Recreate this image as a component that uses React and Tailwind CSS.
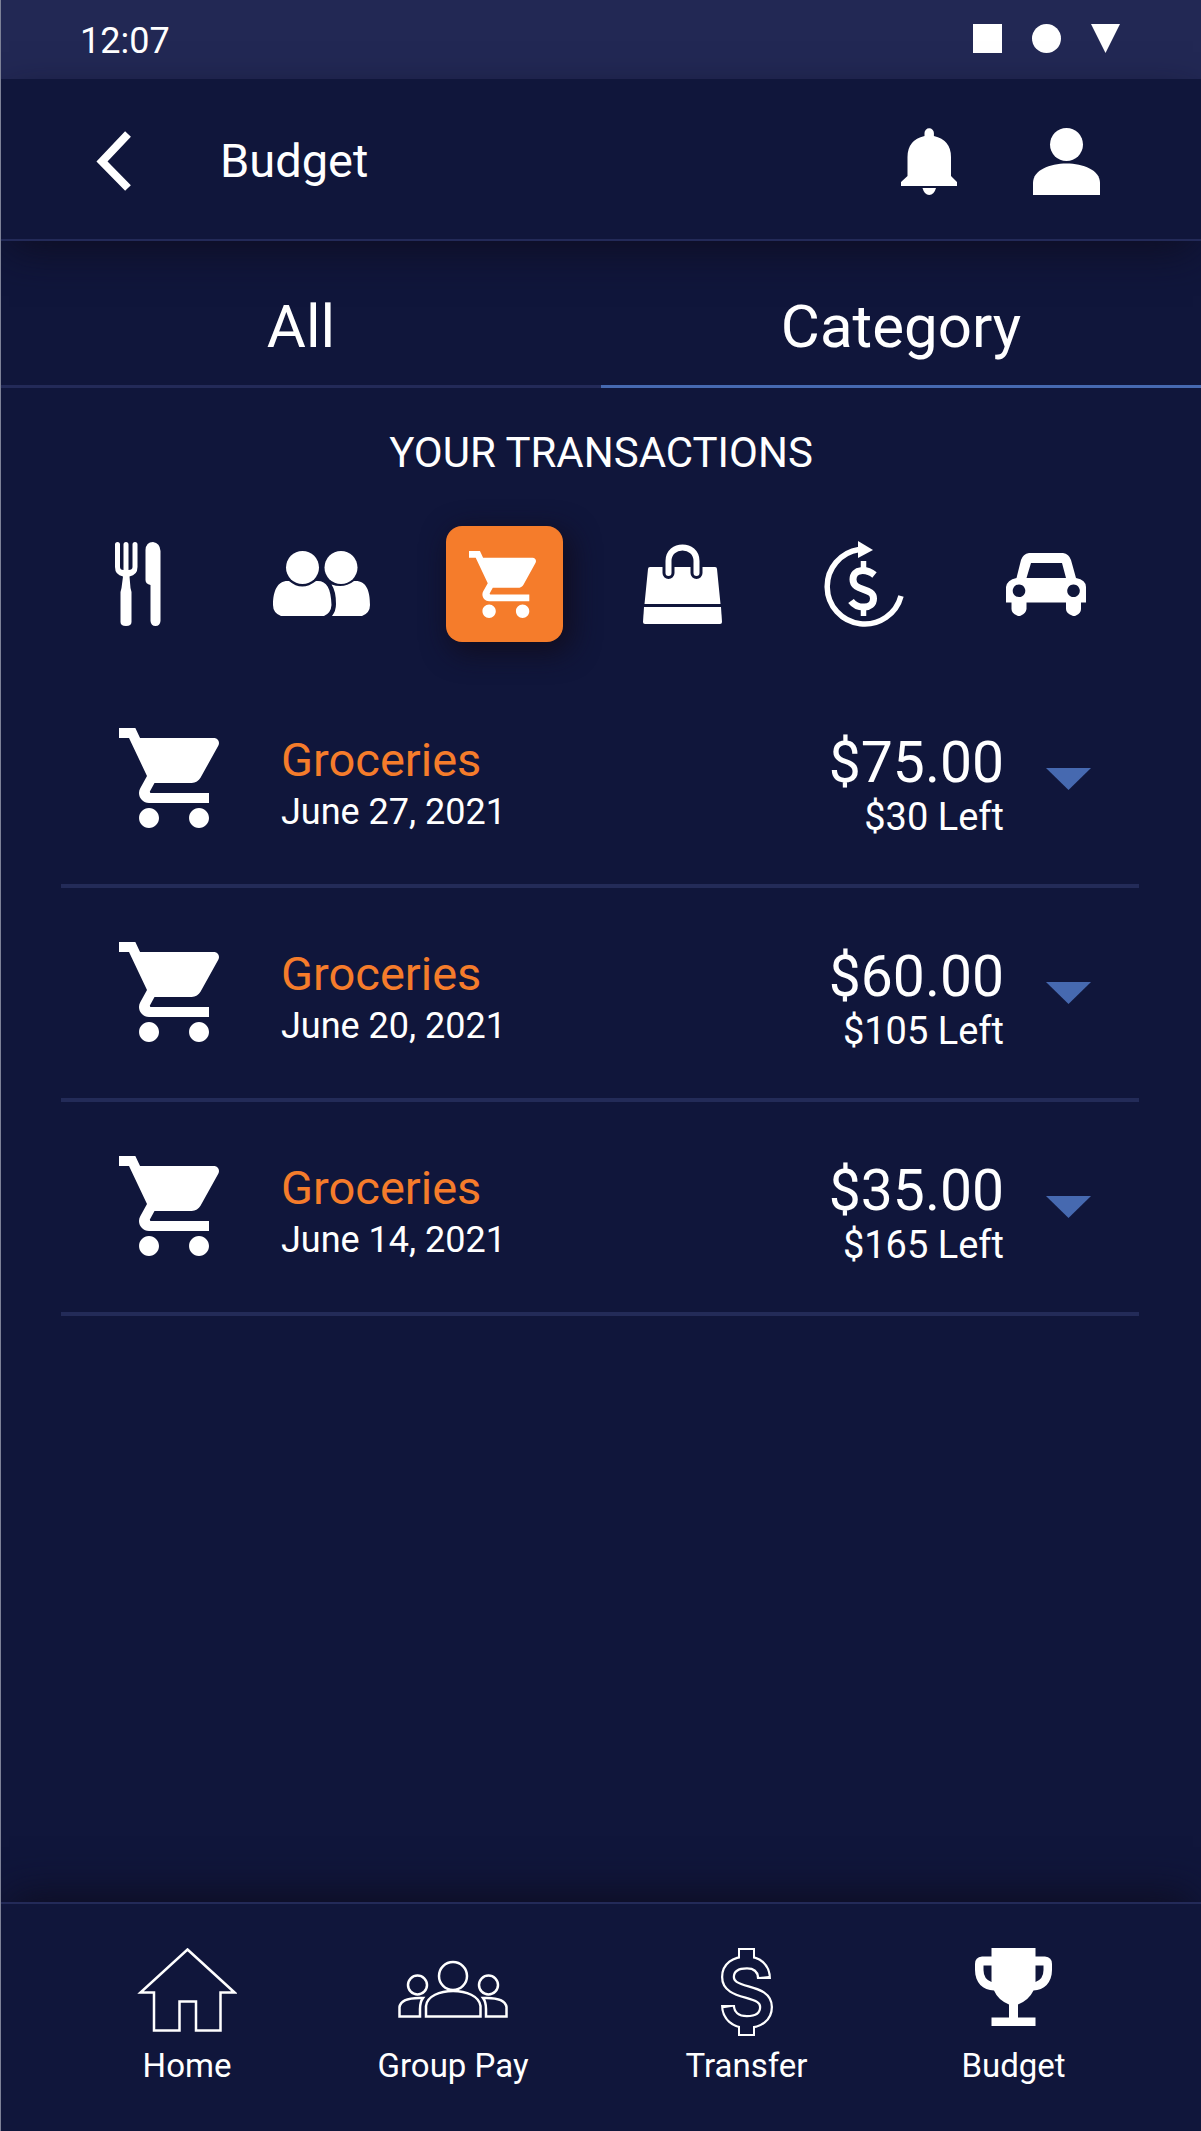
import React, { useState } from "react";

function CartIcon({ className }) {
  return (
    <svg viewBox="1 2 20 20" className={className} fill="currentColor" aria-hidden="true">
      <path d="M7 18c-1.1 0-1.99.9-1.99 2S5.9 22 7 22s2-.9 2-2-.9-2-2-2zM1 2v2h2l3.6 7.59-1.35 2.45c-.16.28-.25.61-.25.96 0 1.1.9 2 2 2h12v-2H7.42c-.14 0-.25-.11-.25-.25l.03-.12.9-1.63h7.45c.75 0 1.41-.41 1.75-1.03l3.58-6.49c.08-.14.12-.31.12-.48 0-.55-.45-1-1-1H5.21l-.94-2H1zm16 16c-1.1 0-1.99.9-1.99 2s.89 2 1.99 2 2-.9 2-2-.9-2-2-2z" />
    </svg>
  );
}

function UtensilsIcon() {
  return (
    <svg viewBox="0 0 46 84" className="h-[84px] w-[46px]" fill="currentColor" aria-hidden="true">
      <path d="M0 2.500a2.500 2.500 0 0 1 5 0V25q0 3 3.500 3V2.500a2.500 2.500 0 0 1 5 0V28Q17.500 28 17.500 25V2.500a2.500 2.500 0 0 1 5 0V25Q22.500 33 14.500 34.500L15.500 46 16.500 50V80Q16.500 84 11 84T5.500 80V50L6.500 46 8 34.500Q0 33 0 25Z" />
      <path d="M30.500 8Q31 0 38 0 45 1 45.500 9V79Q45 84 40.500 84T35.500 79V43Q30.500 42 30.500 38Z" />
    </svg>
  );
}

function PeopleIcon() {
  return (
    <svg viewBox="0 0 97 66" className="h-[66px] w-[97px]" fill="currentColor" aria-hidden="true">
      <circle cx="29.500" cy="16.500" r="16.500" />
      <circle cx="68" cy="16.500" r="16.500" />
      <path d="M16 30Q29 41 43 30C53 29 58 36 58.500 54Q58 62 51 65H8Q0 62 0 54C0 39 5 29 16 30Z" />
      <path d="M58.500 33.500Q71 38 81 30C93 29 97 39 97 54Q97 62 89 65H59Q63 60 63 53 63 40 58.500 33.500Z" />
    </svg>
  );
}

function BagIcon() {
  return (
    <svg viewBox="0 0 79 80" className="h-20 w-[79px]" aria-hidden="true">
      <path d="M7 23H72Q74 23 74 25L77.500 60H1.500L5 25Q5 23 7 23Z" fill="currentColor" />
      <path d="M1 63H78L79 78Q79 80 77 80H2Q0 80 0 78Z" fill="currentColor" />
      <path d="M25.500 22V29M53.500 22V29" stroke="#10163b" strokeWidth="12" strokeLinecap="round" />
      <path d="M25.500 29V17C25.500 -1 53.500 -1 53.500 17V29" fill="none" stroke="currentColor" strokeWidth="6" strokeLinecap="round" />
    </svg>
  );
}

function RecurringIcon() {
  return (
    <svg viewBox="0 0 80 86" className="h-[86px] w-20" fill="none" stroke="currentColor" aria-hidden="true">
      <path d="M35 8.500A37.500 37.500 0 1 0 77 55" strokeWidth="5.500" />
      <path d="M34 0L49 9 34 17Z" fill="currentColor" stroke="none" />
      <path d="M50.500 34C43 28 29 27 29 38.500 29 51 49.500 46 49.500 57.500 49.500 69 33 68 27 60" strokeWidth="7" />
      <path d="M39.500 20V30M39.500 65V75" strokeWidth="5.500" />
    </svg>
  );
}

function CarIcon() {
  return (
    <svg viewBox="0 0 80 63" className="h-[63px] w-20" fill="currentColor" aria-hidden="true">
      <path fillRule="evenodd" d="M23 0H57Q63 1 65 7L70 25Q80 27 80 34V49.500H75V56Q75 60 70 62.500 68 63.500 66 62.500 60 60 60 56V49.500H20.500V56Q20 60 15 62.500 13 63.500 11 62.500 5.500 60 5.500 56V49.500H0V34Q1 27 10.500 25L15 7Q17 1 23 0ZM25 10L20.500 25H60L56 10ZM13 31.500a6.300 6.300 0 1 0 .01 0ZM67.500 31.500a6.300 6.300 0 1 0 .01 0Z" />
    </svg>
  );
}

function BellIcon() {
  return (
    <svg viewBox="0 0 56 67" className="h-[67px] w-14" fill="currentColor" aria-hidden="true">
      <path d="M23.500 8V5a4.700 4.700 0 0 1 9.400 0V8Q50 12 50 29V48L56 54V58H0V54L6.500 48V29Q6.500 12 23.500 8Z" />
      <path d="M21.500 60H35Q33 67 28.200 67T21.500 60Z" />
    </svg>
  );
}

function PersonIcon() {
  return (
    <svg viewBox="0 0 67 67" className="h-[67px] w-[67px]" fill="currentColor" aria-hidden="true">
      <circle cx="33.500" cy="16.500" r="16.500" />
      <path d="M0 67V55C0 29 67 29 67 55V67Z" />
    </svg>
  );
}

function HomeIcon() {
  return (
    <svg viewBox="0 0 100 84" className="h-[84px] w-[100px]" fill="none" stroke="currentColor" strokeWidth="2.500" aria-hidden="true">
      <path d="M50.500 1.500L97.500 44.500H83.500V82.500H59V53.500H42.500V82.500H17V44.500H3.500Z" />
    </svg>
  );
}

function GroupIcon() {
  return (
    <svg viewBox="0 -13 110 84" className="h-[84px] w-[110px]" fill="none" stroke="currentColor" strokeWidth="2.500" aria-hidden="true">
      <circle cx="55" cy="15" r="14" />
      <circle cx="19.500" cy="24" r="9.500" />
      <circle cx="90.500" cy="24" r="9.500" />
      <path d="M28 55.500V45C30 25 80 25 82.500 45V55.500Z" />
      <path d="M1.500 55.500V46Q3 36 25 37 22 41 22 48V55.500Z" />
      <path d="M108.500 55.500V46Q107 36 85 37 88 41 88 48V55.500Z" />
    </svg>
  );
}

function TransferIcon() {
  return (
    <svg viewBox="0 0 52 88" className="h-[88px] w-[52px]" fill="none" aria-hidden="true">
      <path d="M43 31C43 20 36 14.500 26 14.500 14 14.500 7 20 7 29 7 38 15 41 26 44 37 47 45 50 45 59 45 68 38 74 26 74 14 74 7 67 7 57" stroke="currentColor" strokeWidth="14" />
      <path d="M17 0H34V15H17ZM17 73H34V88H17Z" fill="currentColor" />
      <path d="M43 28.500C42 20 36 14.500 26 14.500 14 14.500 7 20 7 29 7 38 15 41 26 44 37 47 45 50 45 59 45 68 38 74 26 74 14 74 8 67 7 59.500" stroke="#10163b" strokeWidth="9.500" />
      <path d="M19 2H32V15H19ZM19 73H32V86H19Z" fill="#10163b" />
    </svg>
  );
}

function TrophyIcon() {
  return (
    <svg viewBox="0 0 77 78" className="h-[78px] w-[77px]" fill="currentColor" aria-hidden="true">
      <path fillRule="evenodd" d="M16.500 0H60.500V8.500H70Q77 9 77 16V22C77 35 69 42 58.500 42.500Q54 52 43 56.500V69.500H60.500V78H16.500V69.500H34V56.500Q23 52 19 42.500C8 42 0 35 0 22V16Q0 9 7 8.500H16.500ZM8.500 17.500V22Q8.500 31 16.500 34V17.500ZM60.500 17.500V34Q68.500 31 68.500 22V17.500Z" />
    </svg>
  );
}

const categories = [
  { name: "Dining", icon: <UtensilsIcon /> },
  { name: "Friends", icon: <PeopleIcon /> },
  { name: "Groceries", icon: <CartIcon className="mr-1 h-[67px] w-[67px]" /> },
  { name: "Shopping", icon: <BagIcon /> },
  { name: "Recurring", icon: <RecurringIcon /> },
  { name: "Auto", icon: <CarIcon /> },
];

const transactions = [
  { date: "June 27, 2021", amount: "$75.00", left: "$30 Left" },
  { date: "June 20, 2021", amount: "$60.00", left: "$105 Left" },
  { date: "June 14, 2021", amount: "$35.00", left: "$165 Left" },
];

const navItems = [
  { label: "Home", icon: <HomeIcon /> },
  { label: "Group Pay", icon: <GroupIcon /> },
  { label: "Transfer", icon: <TransferIcon /> },
  { label: "Budget", icon: <TrophyIcon /> },
];

export default function App() {
  const [tab, setTab] = useState("Category");
  const [category, setCategory] = useState("Groceries");

  return (
    <div className="flex min-h-screen flex-col overflow-hidden border-l border-[#7d8197] bg-[#10163b] font-[Roboto,sans-serif] text-white">
      <div className="flex h-[79px] items-center justify-between bg-[#222854] pr-[81px] pl-[79px]">
        <span className="pt-0.5 text-4xl">12:07</span>
        <div className="flex gap-[30px] pb-0.5" aria-hidden="true">
          <span className="size-[29px] bg-white" />
          <span className="size-[29px] rounded-full bg-white" />
          <svg viewBox="0 0 29 29" className="size-[29px]" fill="currentColor">
            <path d="M0 0H29L14.500 29Z" />
          </svg>
        </div>
      </div>

      <header className="z-10 flex h-[162px] items-center border-b-2 border-[#232a58] bg-[#10163b] pt-1 pr-[101px] pl-[95px] shadow-[0_14px_40px_-8px_#0e0d20]">
        <button type="button" aria-label="Back">
          <svg viewBox="0 0 36 60" className="h-[60px] w-9" fill="none" stroke="currentColor" strokeWidth="8" aria-hidden="true">
            <path d="M32 3L6 30.500 32 57" />
          </svg>
        </button>
        <h1 className="ml-[88px] flex-1 text-[47px] leading-[52px]">Budget</h1>
        <button type="button" aria-label="Notifications">
          <BellIcon />
        </button>
        <button type="button" aria-label="Profile" className="ml-[76px]">
          <PersonIcon />
        </button>
      </header>

      <div className="grid grid-cols-2" role="tablist">
        {["All", "Category"].map((name) => (
          <button
            key={name}
            type="button"
            role="tab"
            aria-selected={tab === name}
            onClick={() => setTab(name)}
            className={
              "h-[147px] border-b-3 pt-7 text-[60px] leading-[64px] " +
              (tab === name ? "border-[#4669b0]" : "border-[#232a58]")
            }
          >
            {name}
          </button>
        ))}
      </div>

      <h2 className="pt-10 text-center text-[42px] leading-[50px]">YOUR TRANSACTIONS</h2>

      <div className="mt-12 mr-[69px] ml-[45px] grid grid-cols-[184fr_183fr_184fr_172fr_192fr_172fr] justify-items-center">
        {categories.map((c) => (
          <button
            key={c.name}
            type="button"
            aria-label={c.name}
            aria-pressed={category === c.name}
            onClick={() => setCategory(c.name)}
            className={
              "flex h-[116px] w-[117px] items-center justify-center rounded-2xl " +
              (category === c.name ? "bg-[#f57c2b] shadow-[6px_8px_28px_2px_#110d1f]" : "")
            }
          >
            {c.icon}
          </button>
        ))}
      </div>

      <ul className="mt-8 mr-[62px] ml-[60px]">
        {transactions.map((t) => (
          <li key={t.date} className="flex h-[214px] border-b-4 border-[#232b58] pr-12 pl-[58px]">
            <CartIcon className="mt-[54px] size-[100px] shrink-0" />
            <div className="ml-[62px] flex-1 pt-[60px]">
              <p className="text-[47px] leading-[52px] text-[#f57c2b]">Groceries</p>
              <p className="text-4xl leading-[52px]">{t.date}</p>
            </div>
            <div className="pt-[62px] text-right">
              <p className="text-[57px] leading-[54px]">{t.amount}</p>
              <p className="text-[38px] leading-[54px]">{t.left}</p>
            </div>
            <button type="button" aria-label={"Details for " + t.date} className="ml-[42px]">
              <svg viewBox="0 0 45 22" className="h-[22px] w-[45px] text-[#4669b0]" fill="currentColor" aria-hidden="true">
                <path d="M0 0H45L22.500 22Z" />
              </svg>
            </button>
          </li>
        ))}
      </ul>

      <nav className="mt-auto h-[229px] border-t-2 border-[#232a58] bg-[#10163b] pr-[81px] pl-[53px] shadow-[0_-14px_40px_-8px_#0e0d20]">
        <div className="grid grid-cols-[266fr_266fr_321fr_213fr] pt-11">
          {navItems.map((n) => (
            <a key={n.label} href="#" className="flex flex-col items-center">
              <span className="flex h-[88px] items-start">{n.icon}</span>
              <span className="mt-2.5 text-[33px] leading-10">{n.label}</span>
            </a>
          ))}
        </div>
      </nav>
    </div>
  );
}
